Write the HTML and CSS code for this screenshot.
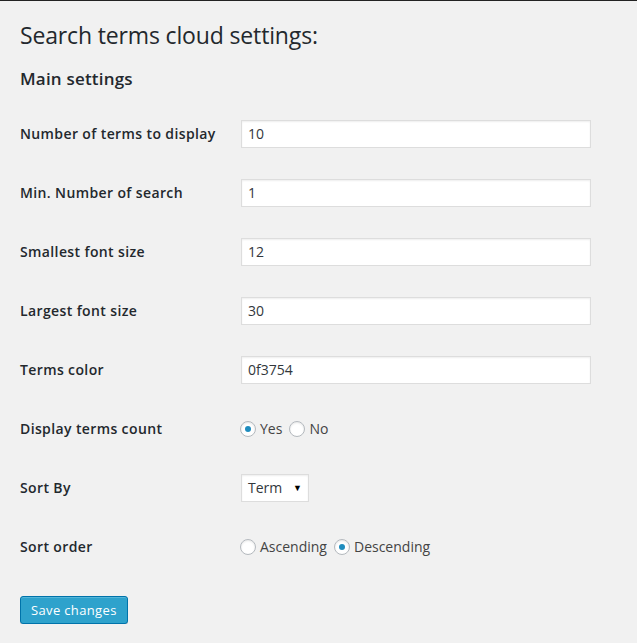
FILE: index.html
```html
<!DOCTYPE html>
<html lang="en">
<head>
    <meta charset="UTF-8">
    <title>Search terms cloud settings</title>
    <link rel="stylesheet" href="styles.css">
</head>
<body>
  <div class="wrap">
    <h2 class="page-title">Search terms cloud settings:</h2>
    <form class="settings">
      <h3 class="section-title">Main settings</h3>
      <div class="form-table">
        <div class="row">
          <label class="label" for="count">Number of terms to display</label>
          <div class="field"><input id="count" class="text-input" type="text" value="10"></div>
        </div>
        <div class="row">
          <label class="label" for="min">Min. Number of search</label>
          <div class="field"><input id="min" class="text-input" type="text" value="1"></div>
        </div>
        <div class="row">
          <label class="label" for="small">Smallest font size</label>
          <div class="field"><input id="small" class="text-input" type="text" value="12"></div>
        </div>
        <div class="row">
          <label class="label" for="large">Largest font size</label>
          <div class="field"><input id="large" class="text-input" type="text" value="30"></div>
        </div>
        <div class="row">
          <label class="label" for="color">Terms color</label>
          <div class="field"><input id="color" class="text-input" type="text" value="0f3754"></div>
        </div>
        <div class="row">
          <span class="label">Display terms count</span>
          <div class="field radios">
            <label class="radio"><span class="dot checked"></span>Yes</label>
            <label class="radio"><span class="dot"></span>No</label>
          </div>
        </div>
        <div class="row">
          <label class="label" for="sort">Sort By</label>
          <div class="field">
            <div class="select" id="sort">Term<span class="arrow">&#9660;</span></div>
          </div>
        </div>
        <div class="row">
          <span class="label">Sort order</span>
          <div class="field radios">
            <label class="radio"><span class="dot"></span>Ascending</label>
            <label class="radio"><span class="dot checked"></span>Descending</label>
          </div>
        </div>
      </div>
      <div class="submit">
        <button type="button" class="button-primary">Save changes</button>
      </div>
    </form>
  </div>
</body>
</html>
```

FILE: styles.css
```css
body {
    margin: 0;
    font-family: "Open Sans", sans-serif;
    font-size: 13px;
    color: #444444;
    background-color: #f1f1f1;
    border-top: 1px solid #222222;
}

.wrap {
    padding: 0 20px;
}

.page-title {
    margin: 0;
    padding: 20px 0 0;
    font-size: 23px;
    font-weight: 400;
    line-height: 29px;
    letter-spacing: -0.15px;
    color: #23282d;
}

.section-title {
    margin: 0;
    padding-top: 17px;
    font-size: 17px;
    font-weight: 600;
    line-height: 24px;
    letter-spacing: 0.2px;
    color: #23282d;
}

.form-table {
    margin-top: 13px;
}

.row {
    display: flex;
    align-items: center;
    height: 59px;
}

.label {
    width: 221px;
    font-size: 14px;
    font-weight: 600;
    letter-spacing: 0.38px;
    color: #23282d;
}

.field {
    display: flex;
    align-items: center;
    font-size: 14px;
    color: #444444;
}

.radios {
    gap: 7px;
    margin-left: -1px;
}

.text-input {
    box-sizing: border-box;
    width: 350px;
    height: 28px;
    padding: 0 6px;
    margin: 0;
    border: 1px solid #dddddd;
    box-shadow: inset 0 1px 2px rgba(0, 0, 0, 0.07);
    background-color: #ffffff;
    font-family: "Open Sans", sans-serif;
    font-size: 14px;
    color: #32373c;
    outline: none;
}

.radio {
    display: flex;
    align-items: center;
    gap: 4px;
}

.dot {
    box-sizing: border-box;
    width: 16px;
    height: 16px;
    border: 1px solid #b4b9be;
    border-radius: 50%;
    background-color: #ffffff;
    box-shadow: inset 0 1px 2px rgba(0, 0, 0, 0.1);
    display: flex;
    align-items: center;
    justify-content: center;
}

.dot.checked::after {
    content: "";
    width: 6px;
    height: 6px;
    border-radius: 50%;
    background-color: #1e8cbe;
}

.select {
    box-sizing: border-box;
    width: 68px;
    height: 28px;
    padding: 0 6px;
    border: 1px solid #dddddd;
    box-shadow: inset 0 1px 2px rgba(0, 0, 0, 0.07);
    background-color: #ffffff;
    display: flex;
    align-items: center;
    justify-content: space-between;
    color: #32373c;
}

.arrow {
    font-size: 9px;
    color: #000000;
}

.submit {
    padding-top: 20px;
}

.button-primary {
    box-sizing: border-box;
    height: 28px;
    padding: 0 10px 1px;
    border: 1px solid #0073aa;
    border-radius: 3px;
    background-color: #2ea2cc;
    box-shadow: inset 0 1px 0 rgba(120, 200, 230, 0.5), 0 1px 0 rgba(0, 0, 0, 0.15);
    font-family: "Open Sans", sans-serif;
    font-size: 13px;
    letter-spacing: 0.35px;
    color: #ffffff;
    cursor: pointer;
}
```
